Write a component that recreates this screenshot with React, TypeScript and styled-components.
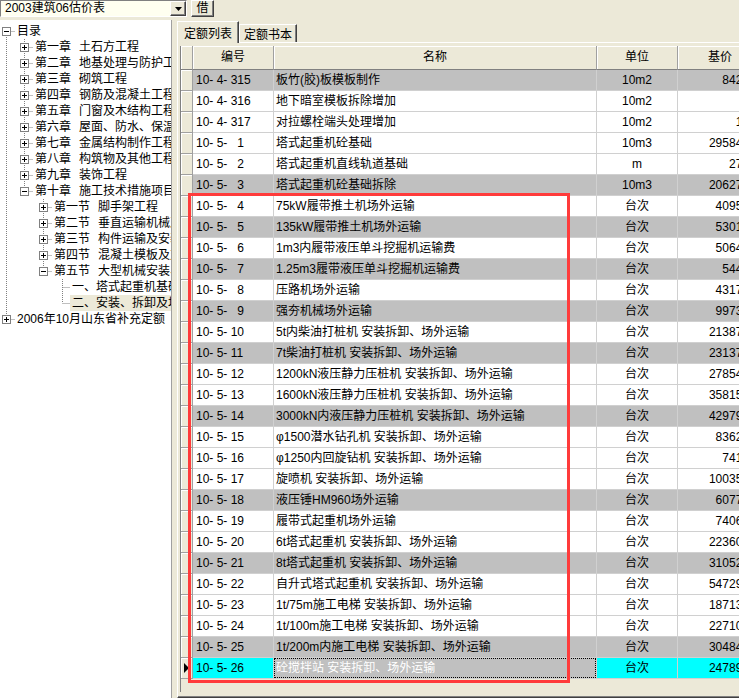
import React from "react";
import styled, { createGlobalStyle, css } from "styled-components";

const GlobalStyle = createGlobalStyle`
  html, body {
    margin: 0;
    padding: 0;
    height: 100%;
    overflow: hidden;
  }
  body {
    background: #ece9d8;
    font-family: "Liberation Sans", "Noto Sans CJK SC", sans-serif;
    font-size: 12px;
    color: #000;
  }
`;

const Page = styled.div`
  position: relative;
  width: 100vw;
  height: 100vh;
  display: flex;
  flex-direction: column;
  overflow: hidden;
`;

/* ---------- top bar ---------- */
const TopBar = styled.div`
  height: 19px;
  flex-shrink: 0;
  display: flex;
  align-items: flex-start;
  gap: 4px;
`;

const Combo = styled.div`
  width: 187px;
  height: 17px;
  box-sizing: border-box;
  border: 1px solid;
  border-color: #808080 #fff #fff #808080;
  background: #fffff0;
  display: flex;
`;

const ComboText = styled.div`
  flex: 1;
  padding-left: 4px;
  line-height: 15px;
  white-space: nowrap;
  overflow: hidden;
`;

const raised = css`
  box-sizing: border-box;
  background: #ece9d8;
  border: 1px solid;
  border-color: #fff #404040 #404040 #fff;
  box-shadow: inset -1px -1px 0 #808080;
`;

const DropButton = styled.div`
  ${raised};
  width: 16px;
  height: 15px;
  display: flex;
  align-items: center;
  justify-content: center;
`;

const ToolButton = styled.div`
  ${raised};
  width: 23px;
  height: 17px;
  line-height: 15px;
  text-align: center;
`;

/* ---------- main area ---------- */
const Main = styled.div`
  flex: 1;
  min-height: 0;
  display: flex;
`;

const TreePanel = styled.div`
  width: 172px;
  flex-shrink: 0;
  margin-top: 1px;
  padding-top: 3px;
  box-sizing: border-box;
  background: #fff;
  border-right: 1px solid #a0a0a0;
  overflow: hidden;
`;

const TreeRow = styled.div`
  height: 16px;
  display: flex;
  align-items: center;
  white-space: nowrap;
`;

const TreeLabel = styled.div<{ $selected?: boolean }>`
  flex: 1;
  height: 16px;
  line-height: 16px;
  padding-left: 2px;
  white-space: pre;
  overflow: hidden;
  background: ${(p) => (p.$selected ? "#ece9d8" : "transparent")};
`;

const TreeTitle = styled.span<{ $gap: number }>`
  margin-left: ${(p) => p.$gap}px;
`;

const Splitter = styled.div`
  width: 5px;
  flex-shrink: 0;
`;

const RightPanel = styled.div`
  flex: 1;
  min-width: 0;
  display: flex;
  flex-direction: column;
`;

const TabStrip = styled.div`
  height: 23px;
  flex-shrink: 0;
  display: flex;
  align-items: flex-end;
`;

const Tab = styled.div<{ $active?: boolean }>`
  box-sizing: border-box;
  border-top: 1px solid #fff;
  border-left: 1px solid #fff;
  border-right: 1px solid #404040;
  box-shadow: inset -1px 0 0 #808080;
  background: #ece9d8;
  display: flex;
  align-items: center;
  justify-content: center;
  white-space: nowrap;
  ${(p) =>
    p.$active
      ? css`
          width: 62px;
          height: 22px;
          margin-bottom: -1px;
          position: relative;
          z-index: 1;
        `
      : css`
          width: 58px;
          height: 18px;
        `}
`;

const TabPanel = styled.div`
  flex: 1;
  min-height: 0;
  box-sizing: border-box;
  border-top: 1px solid #fff;
  border-left: 1px solid #fff;
  border-bottom: 1px solid #404040;
  box-shadow: inset 0 -1px 0 #808080;
  padding: 3px 0 5px 2px;
  display: flex;
  flex-direction: column;
`;

const Grid = styled.div`
  flex: 1;
  min-height: 0;
  border-left: 1px solid #808080;
  overflow: hidden;
`;

const Row = styled.div<{ $head?: boolean }>`
  display: grid;
  grid-template-columns: 12px 81px 323px 81px 85px;
  height: ${(p) => (p.$head ? 24 : 21)}px;
`;

const HeadCell = styled.div`
  box-sizing: border-box;
  border-right: 1px solid #a0a0a0;
  border-bottom: 1px solid #808080;
  box-shadow: inset 1px 1px 0 #fff;
  text-align: center;
  line-height: 23px;
  white-space: nowrap;
  overflow: hidden;
`;

const Indicator = styled.div`
  box-sizing: border-box;
  border-right: 1px solid #a0a0a0;
  border-bottom: 1px solid #a0a0a0;
  box-shadow: inset 1px 1px 0 #fff;
  display: flex;
  align-items: center;
  justify-content: center;
`;

type Tone = "white" | "grey" | "pick";
const toneBg: Record<Tone, string> = {
  white: "#ffffff",
  grey: "#c0c0c0",
  pick: "#00ffff",
};

const Cell = styled.div<{ $tone: Tone; $align?: string; $focus?: boolean }>`
  position: relative;
  box-sizing: border-box;
  border-right: 1px solid #d0d0d0;
  border-bottom: 1px solid #d0d0d0;
  background: ${(p) => toneBg[p.$tone]};
  text-align: ${(p) => p.$align || "left"};
  padding: 0 3px;
  line-height: 20px;
  white-space: pre;
  overflow: hidden;
  ${(p) =>
    p.$focus &&
    css`
      background: #c0c0c0;
      color: #fff;
      &::after {
        content: "";
        position: absolute;
        inset: 0;
        border: 1px dotted #000;
      }
    `}
`;

const NameCell = styled(Cell)`
  padding-left: 2px;
`;

const Highlight = styled.div`
  position: absolute;
  left: 188px;
  top: 193px;
  width: 382px;
  height: 490px;
  box-sizing: border-box;
  border: 3px solid #ff3b3b;
  pointer-events: none;
`;

/* ---------- tree data ---------- */
type TNode = {
  num?: string;
  title: string;
  open?: boolean;
  kids?: TNode[];
  selected?: boolean;
};

const chapter = (num: string, title: string): TNode => ({ num, title, kids: [] });

const tree: TNode[] = [
  {
    title: "目录",
    open: true,
    kids: [
      chapter("第一章", "土石方工程"),
      chapter("第二章", "地基处理与防护工程"),
      chapter("第三章", "砌筑工程"),
      chapter("第四章", "钢筋及混凝土工程"),
      chapter("第五章", "门窗及木结构工程"),
      chapter("第六章", "屋面、防水、保温及防腐工程"),
      chapter("第七章", "金属结构制作工程"),
      chapter("第八章", "构筑物及其他工程"),
      chapter("第九章", "装饰工程"),
      {
        num: "第十章",
        title: "施工技术措施项目",
        open: true,
        kids: [
          chapter("第一节", "脚手架工程"),
          chapter("第二节", "垂直运输机械及超高增加"),
          chapter("第三节", "构件运输及安装工程"),
          chapter("第四节", "混凝土模板及支撑工程"),
          {
            num: "第五节",
            title: "大型机械安装、拆卸及场外运输",
            open: true,
            kids: [
              { num: "一、", title: "塔式起重机基础及轨道铺拆" },
              { num: "二、", title: "安装、拆卸及场外运输费", selected: true },
            ],
          },
        ],
      },
    ],
  },
  { title: "2006年10月山东省补充定额", kids: [] },
];

type Flat = {
  node: TNode;
  level: number;
  conts: boolean[];
  hasNext: boolean;
  first: boolean;
};

const flatten = (nodes: TNode[], level: number, conts: boolean[], out: Flat[]) => {
  nodes.forEach((node, i) => {
    const hasNext = i < nodes.length - 1;
    out.push({ node, level, conts, hasNext, first: out.length === 0 });
    if (node.open && node.kids) flatten(node.kids, level + 1, [...conts, hasNext], out);
  });
  return out;
};

const CX = [6, 24, 43, 62];
const TEXT_X = [17, 35, 54, 72];

const Connector = ({ item }: { item: Flat }) => {
  const w = TEXT_X[item.level] - 2;
  const cx = CX[item.level] + 0.5;
  const dot = { stroke: "#808080", strokeDasharray: "1 1", strokeWidth: 1 };
  const hasBox = !!item.node.kids;
  return (
    <svg width={w} height={16} style={{ flexShrink: 0, display: "block" }}>
      {item.conts.map((c, k) =>
        c ? <line key={k} x1={CX[k] + 0.5} y1={0} x2={CX[k] + 0.5} y2={16} {...dot} /> : null
      )}
      {!(item.first && !item.hasNext) && (
        <line x1={cx} y1={item.first ? 8 : 0} x2={cx} y2={item.hasNext ? 16 : 8} {...dot} />
      )}
      <line x1={cx} y1={8.5} x2={w} y2={8.5} {...dot} />
      {hasBox && (
        <g>
          <rect x={cx - 4} y={4.5} width={8} height={8} fill="#fff" stroke="#808080" />
          <line x1={cx - 2.5} y1={8.5} x2={cx + 2.5} y2={8.5} stroke="#000" />
          {!item.node.open && <line x1={cx} y1={6} x2={cx} y2={11} stroke="#000" />}
        </g>
      )}
    </svg>
  );
};

/* ---------- grid data ---------- */
type Item = [string, number, string, string, string, Tone | "sel"];

const items: Item[] = [
  ["10- 4-", 315, "板竹(胶)板模板制作", "10m2", "842.63", "grey"],
  ["10- 4-", 316, "地下暗室模板拆除增加", "10m2", "", "white"],
  ["10- 4-", 317, "对拉螺栓端头处理增加", "10m2", "1.26", "white"],
  ["10- 5-", 1, "塔式起重机砼基础", "10m3", "29584.71", "white"],
  ["10- 5-", 2, "塔式起重机直线轨道基础", "m", "27.93", "white"],
  ["10- 5-", 3, "塔式起重机砼基础拆除", "10m3", "20627.15", "grey"],
  ["10- 5-", 4, "75kW履带推土机场外运输", "台次", "4095.62", "white"],
  ["10- 5-", 5, "135kW履带推土机场外运输", "台次", "5301.47", "grey"],
  ["10- 5-", 6, "1m3内履带液压单斗挖掘机运输费", "台次", "5064.38", "white"],
  ["10- 5-", 7, "1.25m3履带液压单斗挖掘机运输费", "台次", "544.91", "grey"],
  ["10- 5-", 8, "压路机场外运输", "台次", "4317.25", "white"],
  ["10- 5-", 9, "强夯机械场外运输", "台次", "9973.18", "grey"],
  ["10- 5-", 10, "5t内柴油打桩机 安装拆卸、场外运输", "台次", "21387.44", "white"],
  ["10- 5-", 11, "7t柴油打桩机 安装拆卸、场外运输", "台次", "23137.06", "grey"],
  ["10- 5-", 12, "1200kN液压静力压桩机 安装拆卸、场外运输", "台次", "27854.39", "white"],
  ["10- 5-", 13, "1600kN液压静力压桩机 安装拆卸、场外运输", "台次", "35815.72", "white"],
  ["10- 5-", 14, "3000kN内液压静力压桩机 安装拆卸、场外运输", "台次", "42979.51", "grey"],
  ["10- 5-", 15, "φ1500潜水钻孔机 安装拆卸、场外运输", "台次", "8362.84", "white"],
  ["10- 5-", 16, "φ1250内回旋钻机 安装拆卸、场外运输", "台次", "741.65", "white"],
  ["10- 5-", 17, "旋喷机 安装拆卸、场外运输", "台次", "10035.27", "white"],
  ["10- 5-", 18, "液压锤HM960场外运输", "台次", "6077.93", "grey"],
  ["10- 5-", 19, "履带式起重机场外运输", "台次", "7406.12", "white"],
  ["10- 5-", 20, "6t塔式起重机 安装拆卸、场外运输", "台次", "22360.58", "white"],
  ["10- 5-", 21, "8t塔式起重机 安装拆卸、场外运输", "台次", "31052.76", "grey"],
  ["10- 5-", 22, "自升式塔式起重机 安装拆卸、场外运输", "台次", "54729.33", "white"],
  ["10- 5-", 23, "1t/75m施工电梯 安装拆卸、场外运输", "台次", "18713.49", "white"],
  ["10- 5-", 24, "1t/100m施工电梯 安装拆卸、场外运输", "台次", "22710.85", "white"],
  ["10- 5-", 25, "1t/200m内施工电梯 安装拆卸、场外运输", "台次", "30484.17", "grey"],
  ["10- 5-", 26, "砼搅拌站 安装拆卸、场外运输", "台次", "24789.62", "sel"],
];

// single-digit codes are padded so the digit lines up like the original grid
const codeText = (pre: string, n: number) => pre + (n < 10 ? "   " : " ") + n;

const App = () => {
  const flat = flatten(tree, 0, [], []);
  return (
    <Page>
      <GlobalStyle />
      <TopBar>
        <Combo>
          <ComboText>2003建筑06估价表</ComboText>
          <DropButton>
            <svg width="7" height="4">
              <polygon points="0,0 7,0 3.5,4" fill="#000" />
            </svg>
          </DropButton>
        </Combo>
        <ToolButton>借</ToolButton>
      </TopBar>
      <Main>
        <TreePanel>
          {flat.map((it, i) => (
            <TreeRow key={i}>
              <Connector item={it} />
              <TreeLabel $selected={it.node.selected}>
                {it.node.num}
                {it.node.num ? (
                  <TreeTitle $gap={it.node.num.endsWith("、") ? 0 : 8}>{it.node.title}</TreeTitle>
                ) : (
                  it.node.title
                )}
              </TreeLabel>
            </TreeRow>
          ))}
        </TreePanel>
        <Splitter />
        <RightPanel>
          <TabStrip>
            <Tab $active>定额列表</Tab>
            <Tab>定额书本</Tab>
          </TabStrip>
          <TabPanel>
            <Grid>
              <Row $head>
                <HeadCell />
                <HeadCell>编号</HeadCell>
                <HeadCell>名称</HeadCell>
                <HeadCell>单位</HeadCell>
                <HeadCell>基价</HeadCell>
              </Row>
              {items.map(([pre, n, name, unit, price, tone]) => {
                const sel = tone === "sel";
                const t: Tone = sel ? "pick" : tone;
                return (
                  <Row key={pre + n}>
                    <Indicator>
                      {sel && (
                        <svg width="5" height="10">
                          <polygon points="0,0 5,5 0,10" fill="#000" />
                        </svg>
                      )}
                    </Indicator>
                    <Cell $tone={t}>{codeText(pre, n)}</Cell>
                    <NameCell $tone={t} $focus={sel}>
                      {name}
                    </NameCell>
                    <Cell $tone={t} $align="center">
                      {unit}
                    </Cell>
                    <Cell $tone={t} $align="right">
                      {price}
                    </Cell>
                  </Row>
                );
              })}
            </Grid>
          </TabPanel>
        </RightPanel>
      </Main>
      <Highlight />
    </Page>
  );
};

export default App;
